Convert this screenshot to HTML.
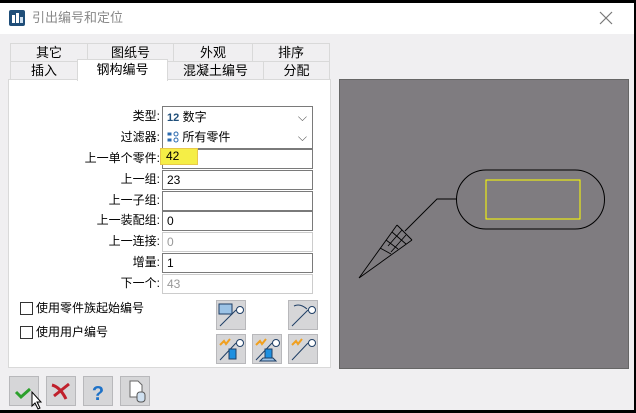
<!DOCTYPE html>
<html><head><meta charset="utf-8"><style>
*{margin:0;padding:0;box-sizing:border-box}
body{width:636px;height:413px;overflow:hidden;background:#000;font-family:"Liberation Sans","Noto Sans CJK SC",sans-serif;font-size:12px;color:#000;position:relative}
.a{position:absolute}
#win{left:0;top:3px;width:634px;height:407px;background:#f0eff1}
#title{left:0;top:3px;width:634px;height:31px;background:#fff}
.tab{position:absolute;border:1px solid #d9d9d9;background:#f0eff1;text-align:center;font-size:13px;line-height:17px}
.lbl{position:absolute;right:476px;text-align:right;font-size:12px;line-height:19px;width:150px}
.fld{position:absolute;left:162px;width:151px;height:20px;border:1px solid #7a7a7a;background:#fff;font-size:12px;line-height:18px;padding-left:4px}
.dis{border-color:#ccc;color:#999}
.chk{position:absolute;width:13px;height:13px;border:1px solid #333;background:#fff}
</style></head><body>
<div id="win" class="a"></div>
<div id="title" class="a"></div>
<div class="a" style="left:9px;top:10px;width:16px;height:16px;background:#1f4e79;border-radius:2px"></div>
<div class="a" style="left:12px;top:15px;width:3px;height:8px;background:#fff"></div>
<div class="a" style="left:16px;top:13px;width:3px;height:10px;background:#fff"></div>
<div class="a" style="left:20px;top:17px;width:3px;height:6px;background:#cfe0f0"></div>
<div class="a" style="left:32px;top:9px;font-size:13px;color:#888;line-height:18px">引出编号和定位</div>
<svg class="a" style="left:599px;top:11px" width="14" height="14"><path d="M1 1 L13 13 M13 1 L1 13" stroke="#777" stroke-width="1.2"/></svg>

<div class="a" style="left:8px;top:79px;width:323px;height:289px;background:#fff;border:1px solid #d9d9d9"></div>
<div class="tab" style="left:10px;top:43px;width:78px;height:19px">其它</div>
<div class="tab" style="left:87px;top:43px;width:87px;height:19px">图纸号</div>
<div class="tab" style="left:173px;top:43px;width:80px;height:19px">外观</div>
<div class="tab" style="left:252px;top:43px;width:78px;height:19px">排序</div>
<div class="tab" style="left:10px;top:61px;width:68px;height:19px">插入</div>
<div class="tab" style="left:167px;top:61px;width:97px;height:19px">混凝土编号</div>
<div class="tab" style="left:263px;top:61px;width:67px;height:19px">分配</div>
<div class="tab" style="left:77px;top:59px;width:91px;height:22px;background:#fff;border-bottom:none;line-height:20px">钢构编号</div>

<div class="lbl" style="top:107px">类型:</div>
<div class="lbl" style="top:128px">过滤器:</div>
<div class="lbl" style="top:149px">上一单个零件:</div>
<div class="lbl" style="top:170px">上一组:</div>
<div class="lbl" style="top:191px">上一子组:</div>
<div class="lbl" style="top:211px">上一装配组:</div>
<div class="lbl" style="top:232px">上一连接:</div>
<div class="lbl" style="top:253px">增量:</div>
<div class="lbl" style="top:274px">下一个:</div>

<div class="fld" style="top:106px;height:23px;line-height:21px"><span style="color:#1f4e79;font-size:11px;font-weight:bold">12</span> 数字<span style="position:absolute;right:5px;color:#555">⌵</span></div>
<div class="fld" style="top:128px;height:21px;line-height:19px;border-top:none"><svg width="12" height="12" style="vertical-align:-2px"><rect x="0.5" y="1.5" width="4" height="3" fill="#2a6ab0"/><rect x="0.5" y="7.5" width="4" height="3" fill="#2a6ab0"/><circle cx="9" cy="3" r="2" fill="none" stroke="#2a6ab0"/><circle cx="9" cy="9" r="2" fill="none" stroke="#2a6ab0"/></svg> 所有零件<span style="position:absolute;right:5px;color:#555">⌵</span></div>
<div class="fld" style="top:149px"></div>
<div class="a" style="left:160px;top:148px;width:38px;height:17px;background:#f5ee46;border:1px solid #e8c84a;line-height:15px;padding-left:5px">42</div>
<div class="fld" style="top:170px">23</div>
<div class="fld" style="top:191px"></div>
<div class="fld" style="top:211px">0</div>
<div class="fld dis" style="top:232px">0</div>
<div class="fld" style="top:253px">1</div>
<div class="fld dis" style="top:274px">43</div>

<div class="chk" style="left:20px;top:302px"></div>
<div class="a" style="left:36px;top:299px;font-size:12px;line-height:18px">使用零件族起始编号</div>
<div class="chk" style="left:20px;top:326px"></div>
<div class="a" style="left:36px;top:323px;font-size:12px;line-height:18px">使用用户编号</div>

<svg class="a" style="left:0;top:0" width="636" height="413">
<g fill="#d6d6d8" stroke="#b8b8bb">
<rect x="216.5" y="300.5" width="29" height="29"/><rect x="288.5" y="300.5" width="29" height="29"/>
<rect x="216.5" y="334.5" width="29" height="29"/><rect x="252.5" y="334.5" width="29" height="29"/><rect x="288.5" y="334.5" width="29" height="29"/>
</g>
<g fill="#fff" stroke="#1f3f66">
<circle cx="240" cy="310" r="3.5"/><circle cx="312" cy="310" r="3.5"/><circle cx="240" cy="343" r="3.5"/><circle cx="276" cy="343" r="3.5"/><circle cx="312" cy="343" r="3.5"/>
</g>
<g stroke="#1f3f66" fill="none">
<path d="M236 310 L220 326 M308 310 L292 326 M236 343 L220 360 M272 343 L256 360 M308 343 L292 360"/>
<path d="M307 309 Q300 303 294 306"/>
</g>
<rect x="219" y="304" width="13" height="10" fill="#9cc3e6" stroke="#1f3f66"/>
<g stroke="#f0a020" stroke-width="2" fill="none"><path d="M220 345 l4-4 2 3 4-5 M256 345 l4-4 2 3 4-5 M292 345 l4-4 2 3 4-5"/></g>
<rect x="229" y="349" width="7" height="10" fill="#1e90e0" stroke="#1f3f66"/>
<rect x="265" y="349" width="7" height="9" fill="#1e90e0" stroke="#1f3f66"/>
<path d="M260 361 h16 l-3 -3 h-10z" fill="#9cc3e6" stroke="#1f3f66"/>

<rect x="339.5" y="79.5" width="289" height="289" fill="#7f7c80" stroke="#666"/>
<path d="M486 170 H575 A29.5 29.5 0 0 1 575 229 H486 A29.5 29.5 0 0 1 486 170Z" fill="none" stroke="#000"/>
<rect x="486" y="180" width="94" height="39" fill="none" stroke="#ff0" stroke-width="1"/>
<path d="M456 199 H437 L405 231 M359 278 L397 225 M359 278 L412 240 M397 225 L412 240 M392 232 L406 244 M386 240 L398 249 M380 248 L391 254 M402 230 L388 246 M406 235 L391 252" fill="none" stroke="#000" stroke-width="0.9"/>

<g fill="#d6d6d8" stroke="#b8b8bb">
<rect x="9.5" y="376.5" width="29" height="29"/><rect x="46.5" y="376.5" width="29" height="29"/><rect x="83.5" y="376.5" width="29" height="29"/><rect x="120.5" y="376.5" width="29" height="29"/>
</g>
<path d="M16 392 l5 5 9-8" fill="none" stroke="#2ca02c" stroke-width="3"/>
<path d="M52 385 q8 2 14 14 M54 396 l15-12" fill="none" stroke="#c0202c" stroke-width="3"/>
<text x="98" y="400" font-size="20" font-weight="bold" fill="#1e72c8" text-anchor="middle" font-family="Liberation Sans">?</text>
<path d="M130 381 h8 l4 4 v12 h-12z" fill="#fff" stroke="#666"/>
<rect x="137" y="392" width="8" height="10" rx="3" fill="#cfe0f0" stroke="#555"/>
<path d="M32 392 v14 l3-3 3 6 2-1 -3-6 h4z" fill="#fff" stroke="#000"/>
</svg>
</body></html>
